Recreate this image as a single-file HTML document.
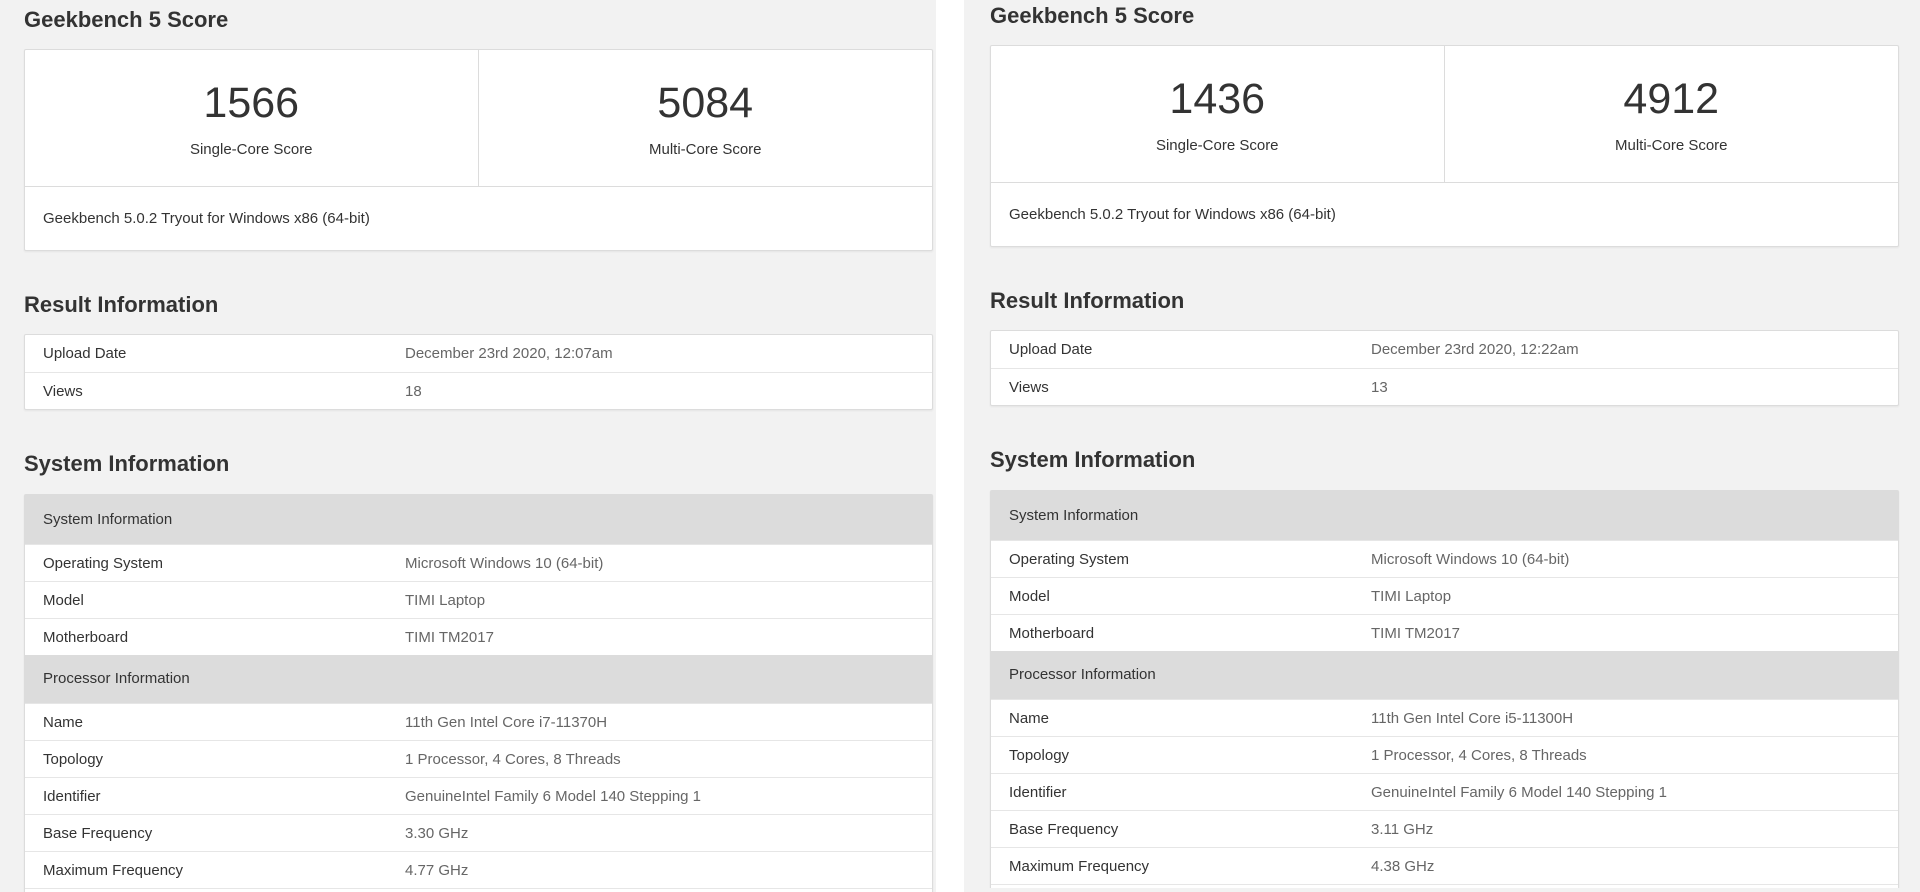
<!DOCTYPE html>
<html><head><meta charset="utf-8"><style>
*{margin:0;padding:0;box-sizing:border-box}
html,body{width:1920px;height:892px;overflow:hidden}
body{background:#fff;font-family:"Liberation Sans",Arial,sans-serif;position:relative}
.panel{position:absolute;top:0;height:892px;background:#f2f2f2;overflow:hidden}
.in{position:absolute;left:0;width:100%;height:892px;overflow:hidden}
h2{position:absolute;left:24px;font-size:22px;font-weight:bold;color:#333;line-height:26px}
.card{position:absolute;left:24px;right:3px;background:#fff;border:1px solid #dcdcdc;border-radius:2px;box-shadow:0 1px 2px rgba(0,0,0,.06)}
.sc{position:absolute;top:0;height:136px;width:50%;text-align:center}
.sc .n{position:absolute;top:28px;left:0;right:0;font-size:43px;color:#333;line-height:50px}
.sc .l{position:absolute;top:90px;left:0;right:0;font-size:15px;color:#333;line-height:20px}
.foot{position:absolute;top:136px;left:0;right:0;border-top:1px solid #dcdcdc;height:64px;padding:23px 0 0 18px;font-size:15px;color:#333}
.row{position:relative;height:37px;border-top:1px solid #e6e6e6;font-size:15px;line-height:37px}
.row:first-child{border-top:none}
.row .k{position:absolute;left:18px;color:#333}
.row .v{position:absolute;left:380px;color:#666}
.hd{height:49px;background:#dcdcdc;line-height:49px;border-top:none}
.hd2{height:48px;line-height:48px}
</style></head><body>

<div class="panel" style="left:0;width:936px">
<div class="in" style="top:0">
<h2 style="top:7px">Geekbench 5 Score</h2>
<div class="card" style="top:49px;height:202px">
<div class="sc" style="left:0;border-right:1px solid #dcdcdc"><div class="n">1566</div><div class="l">Single-Core Score</div></div>
<div class="sc" style="left:50%"><div class="n">5084</div><div class="l">Multi-Core Score</div></div>
<div class="foot">Geekbench 5.0.2 Tryout for Windows x86 (64-bit)</div>
</div>
<h2 style="top:292px">Result Information</h2>
<div class="card" style="top:334px">
<div class="row"><span class="k">Upload Date</span><span class="v">December 23rd 2020, 12:07am</span></div>
<div class="row"><span class="k">Views</span><span class="v">18</span></div>
</div>
<h2 style="top:451px">System Information</h2>
<div class="card" style="top:494px">
<div class="row hd"><span class="k">System Information</span></div>
<div class="row"><span class="k">Operating System</span><span class="v">Microsoft Windows 10 (64-bit)</span></div>
<div class="row"><span class="k">Model</span><span class="v">TIMI Laptop</span></div>
<div class="row"><span class="k">Motherboard</span><span class="v">TIMI TM2017</span></div>
<div class="row hd hd2"><span class="k">Processor Information</span></div>
<div class="row"><span class="k">Name</span><span class="v">11th Gen Intel Core i7-11370H</span></div>
<div class="row"><span class="k">Topology</span><span class="v">1 Processor, 4 Cores, 8 Threads</span></div>
<div class="row"><span class="k">Identifier</span><span class="v">GenuineIntel Family 6 Model 140 Stepping 1</span></div>
<div class="row"><span class="k">Base Frequency</span><span class="v">3.30 GHz</span></div>
<div class="row"><span class="k">Maximum Frequency</span><span class="v">4.77 GHz</span></div>
<div class="row"><span class="k">&nbsp;</span></div>
</div>
</div></div>

<div class="panel" style="left:964px;width:956px">
<div class="in" style="top:-4px;left:2px;width:954px">
<h2 style="top:7px">Geekbench 5 Score</h2>
<div class="card" style="top:49px;height:202px;right:21px">
<div class="sc" style="left:0;border-right:1px solid #dcdcdc"><div class="n">1436</div><div class="l">Single-Core Score</div></div>
<div class="sc" style="left:50%"><div class="n">4912</div><div class="l">Multi-Core Score</div></div>
<div class="foot">Geekbench 5.0.2 Tryout for Windows x86 (64-bit)</div>
</div>
<h2 style="top:292px">Result Information</h2>
<div class="card" style="top:334px;right:21px">
<div class="row"><span class="k">Upload Date</span><span class="v">December 23rd 2020, 12:22am</span></div>
<div class="row"><span class="k">Views</span><span class="v">13</span></div>
</div>
<h2 style="top:451px">System Information</h2>
<div class="card" style="top:494px;right:21px">
<div class="row hd"><span class="k">System Information</span></div>
<div class="row"><span class="k">Operating System</span><span class="v">Microsoft Windows 10 (64-bit)</span></div>
<div class="row"><span class="k">Model</span><span class="v">TIMI Laptop</span></div>
<div class="row"><span class="k">Motherboard</span><span class="v">TIMI TM2017</span></div>
<div class="row hd hd2"><span class="k">Processor Information</span></div>
<div class="row"><span class="k">Name</span><span class="v">11th Gen Intel Core i5-11300H</span></div>
<div class="row"><span class="k">Topology</span><span class="v">1 Processor, 4 Cores, 8 Threads</span></div>
<div class="row"><span class="k">Identifier</span><span class="v">GenuineIntel Family 6 Model 140 Stepping 1</span></div>
<div class="row"><span class="k">Base Frequency</span><span class="v">3.11 GHz</span></div>
<div class="row"><span class="k">Maximum Frequency</span><span class="v">4.38 GHz</span></div>
<div class="row"><span class="k">&nbsp;</span></div>
</div>
</div></div>

</body></html>
